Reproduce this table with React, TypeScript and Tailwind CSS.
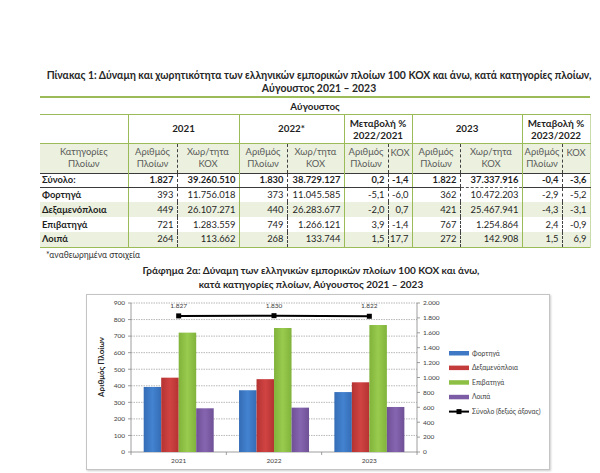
import React from "react";

type Row = string[];

const total: Row = ["Σύνολο:", "1.827", "39.260.510", "1.830", "38.729.127", "0,2", "-1,4", "1.822", "37.337.916", "-0,4", "-3,6"];
const rows: Row[] = [
  ["Φορτηγά", "393", "11.756.018", "373", "11.045.585", "-5,1", "-6,0", "362", "10.472.203", "-2,9", "-5,2"],
  ["Δεξαμενόπλοια", "449", "26.107.271", "440", "26.283.677", "-2,0", "0,7", "421", "25.467.941", "-4,3", "-3,1"],
  ["Επιβατηγά", "721", "1.283.559", "749", "1.266.121", "3,9", "-1,4", "767", "1.254.864", "2,4", "-0,9"],
  ["Λοιπά", "264", "113.662", "268", "133.744", "1,5", "17,7", "272", "142.908", "1,5", "6,9"],
];

// right border per column
const rb = [
  "border-r border-r-[#9bbb59]",
  "border-r border-r-[#404040] [border-right-style:dashed]",
  "border-r border-r-[#9bbb59]",
  "border-r border-r-[#404040] [border-right-style:dashed]",
  "border-r border-r-[#9bbb59]",
  "border-r border-r-[#404040] [border-right-style:dashed]",
  "border-r border-r-[#9bbb59]",
  "border-r border-r-[#404040] [border-right-style:dashed]",
  "border-r border-r-[#9bbb59]",
  "border-r border-r-[#404040] [border-right-style:dashed]",
  "border-r border-r-[#c9dba8]",
];

function Chart() {
  const plotL = 44;
  const plotR = 330;
  const y0 = 157;
  const yL = (v: number) => y0 - (v * 149) / 900;
  const yR = (v: number) => y0 - (v * 149) / 2000;
  const gw = (plotR - plotL) / 3;
  const data = [
    { year: "2021", vals: [393, 449, 721, 264], total: 1827, lbl: "1.827" },
    { year: "2022", vals: [373, 440, 749, 268], total: 1830, lbl: "1.830" },
    { year: "2023", vals: [362, 421, 767, 272], total: 1822, lbl: "1.822" },
  ];
  const fills = ["url(#gb)", "url(#gr)", "url(#gg)", "url(#gp)"];
  const legendCols = ["#3f78c4", "#c33b3a", "#8dbf45", "#7c5ca4"];
  const legend = ["Φορτηγά", "Δεξαμενόπλοια", "Επιβατηγά", "Λοιπά"];
  const centers = data.map((_, i) => plotL + gw * i + gw / 2);
  const font = "Lato, 'Noto Sans', sans-serif";
  return (
    <svg width="462" height="174" viewBox="0 0 462 174" style={{ fontFamily: font }}>
      <defs>
        <linearGradient id="gb" x1="0" x2="1" y1="0" y2="0">
          <stop offset="0" stopColor="#356cb6" />
          <stop offset="0.5" stopColor="#4383d0" />
          <stop offset="1" stopColor="#356cb6" />
        </linearGradient>
        <linearGradient id="gr" x1="0" x2="1" y1="0" y2="0">
          <stop offset="0" stopColor="#b43332" />
          <stop offset="0.5" stopColor="#d04443" />
          <stop offset="1" stopColor="#b43332" />
        </linearGradient>
        <linearGradient id="gg" x1="0" x2="1" y1="0" y2="0">
          <stop offset="0" stopColor="#81b33b" />
          <stop offset="0.5" stopColor="#98cb4e" />
          <stop offset="1" stopColor="#81b33b" />
        </linearGradient>
        <linearGradient id="gp" x1="0" x2="1" y1="0" y2="0">
          <stop offset="0" stopColor="#6f5196" />
          <stop offset="0.5" stopColor="#8665b0" />
          <stop offset="1" stopColor="#6f5196" />
        </linearGradient>
      </defs>
      {[1, 2, 3, 4, 5, 6, 7, 8, 9].map((k) => (
        <line key={k} x1={plotL} x2={plotR} y1={yL(k * 100)} y2={yL(k * 100)} stroke="#9a9a9a" strokeWidth="0.7" strokeDasharray="1.5 1" />
      ))}
      <line x1={plotL} x2={plotL} y1={yL(900)} y2={y0} stroke="#868686" strokeWidth="0.8" />
      {[0, 1, 2, 3, 4, 5, 6, 7, 8, 9].map((k) => (
        <g key={k}>
          <line x1={plotL - 3} x2={plotL} y1={yL(k * 100)} y2={yL(k * 100)} stroke="#868686" strokeWidth="0.8" />
          <text x={plotL - 6} y={yL(k * 100) + 2.3} fontSize="6.5" fill="#404040" textAnchor="end">
            {k * 100}
          </text>
        </g>
      ))}
      <line x1={plotR} x2={plotR} y1={yR(2000)} y2={y0} stroke="#868686" strokeWidth="0.8" />
      {[0, 1, 2, 3, 4, 5, 6, 7, 8, 9, 10].map((k) => {
        const v = k * 200;
        const s = v >= 1000 ? `${Math.floor(v / 1000)}.${String(v % 1000).padStart(3, "0")}` : String(v);
        return (
          <g key={k}>
            <line x1={plotR} x2={plotR + 3} y1={yR(v)} y2={yR(v)} stroke="#868686" strokeWidth="0.8" />
            <text x={plotR + 6} y={yR(v) + 2.3} fontSize="6.5" fill="#404040">
              {s}
            </text>
          </g>
        );
      })}
      <line x1={plotL} x2={plotR} y1={y0} y2={y0} stroke="#868686" strokeWidth="0.8" />
      {[0, 1, 2, 3].map((k) => (
        <line key={k} x1={plotL + gw * k} x2={plotL + gw * k} y1={y0} y2={y0 + 3} stroke="#868686" strokeWidth="0.8" />
      ))}
      {data.map((d, i) => (
        <g key={d.year}>
          {d.vals.map((v, j) => (
            <rect key={j} x={plotL + gw * i + 12.7 + j * 17.5} y={yL(v)} width="17.5" height={y0 - yL(v)} fill={fills[j]} />
          ))}
          <text x={centers[i]} y={y0 + 11} fontSize="6.5" fill="#404040" textAnchor="middle">
            {d.year}
          </text>
        </g>
      ))}
      <polyline points={data.map((d, i) => `${centers[i]},${yR(d.total)}`).join(" ")} fill="none" stroke="#000" strokeWidth="2" />
      {data.map((d, i) => (
        <g key={"m" + i}>
          <rect x={centers[i] - 2.5} y={yR(d.total) - 2.5} width="5" height="5" fill="#000" />
          <text x={centers[i]} y={yR(d.total) - 8} fontSize="6.5" fill="#404040" textAnchor="middle">
            {d.lbl}
          </text>
        </g>
      ))}
      <text x="0" y="0" transform="translate(17,72) rotate(-90)" fontSize="8" fontWeight="700" fill="#262626" textAnchor="middle">
        Αριθμός Πλοίων
      </text>
      {legend.map((l, i) => (
        <g key={l}>
          <rect x="362" y={56 + i * 14.6} width="20" height="4.5" fill={legendCols[i]} />
          <text x="385" y={60.5 + i * 14.6} fontSize="6.8" fill="#404040">
            {l}
          </text>
        </g>
      ))}
      <line x1="362" x2="382" y1={116.6} y2={116.6} stroke="#000" strokeWidth="2" />
      <rect x="369.5" y="114.1" width="5" height="5" fill="#000" />
      <text x="385" y="119" fontSize="6.8" fill="#404040">
        Σύνολο (δεξιός άξονας)
      </text>
    </svg>
  );
}

export default function App() {
  return (
    <div className="w-[600px] h-[473px] overflow-hidden bg-white text-[#1f1f1f] [font-family:Lato,'Noto_Sans',sans-serif]">
      <div className="pt-[69px] ml-[44px] w-[550px] text-center font-bold text-[10.4px] leading-[13px] text-[#262626]">
        Πίνακας 1: Δύναμη και χωρητικότητα των ελληνικών εμπορικών πλοίων 100 ΚΟΧ και άνω, κατά κατηγορίες πλοίων,
        <br />
        Αύγουστος 2021 – 2023
      </div>
      <table className="ml-[40px] w-[550px] table-fixed border-collapse text-[9.4px] mt-[1px]">
        <colgroup>
          <col className="w-[88px]" />
          <col className="w-[49px]" />
          <col className="w-[62px]" />
          <col className="w-[48px]" />
          <col className="w-[57px]" />
          <col className="w-[44px]" />
          <col className="w-[24px]" />
          <col className="w-[48px]" />
          <col className="w-[62px]" />
          <col className="w-[40px]" />
          <col className="w-[28px]" />
        </colgroup>
        <tbody>
          <tr className="h-[17px]">
            <td colSpan={11} className="border-t-2 border-t-[#9bbb59] border-b border-b-[#9bbb59] text-center font-bold p-0 leading-[14px] text-[9.8px]">
              Αύγουστος
            </td>
          </tr>
          <tr className="h-[29px] font-bold text-[9.8px]">
            <td className="border-r border-r-[#9bbb59] border-b border-b-[#9bbb59] p-0"></td>
            <td colSpan={2} className="border-r border-r-[#9bbb59] border-b border-b-[#9bbb59] text-center p-0">2021</td>
            <td colSpan={2} className="border-r border-r-[#9bbb59] border-b border-b-[#9bbb59] text-center p-0">2022*</td>
            <td colSpan={2} className="border-r border-r-[#9bbb59] border-b border-b-[#9bbb59] text-center p-0 leading-[12px]">
              Μεταβολή %<br />2022/2021
            </td>
            <td colSpan={2} className="border-r border-r-[#9bbb59] border-b border-b-[#9bbb59] text-center p-0">2023</td>
            <td colSpan={2} className="border-r border-r-[#c9dba8] border-b border-b-[#9bbb59] text-center p-0 leading-[12px]">
              Μεταβολή %<br />2023/2022
            </td>
          </tr>
          <tr className="h-[30px] bg-[#ebf1de] text-[#5a5a5a] leading-[12px]">
            <td className={`${rb[0]} text-center p-0`}>Κατηγορίες<br />Πλοίων</td>
            <td className={`${rb[1]} text-center p-0`}>Αριθμός<br />Πλοίων</td>
            <td className={`${rb[2]} text-center p-0`}>Χωρ/τητα<br />ΚΟΧ</td>
            <td className={`${rb[3]} text-center p-0`}>Αριθμός<br />Πλοίων</td>
            <td className={`${rb[4]} text-center p-0`}>Χωρ/τητα<br />ΚΟΧ</td>
            <td className={`${rb[5]} text-center p-0`}>Αριθμός<br />Πλοίων</td>
            <td className={`${rb[6]} text-center align-top pt-[3px] p-0`}>ΚΟΧ</td>
            <td className={`${rb[7]} text-center p-0`}>Αριθμός<br />Πλοίων</td>
            <td className={`${rb[8]} text-center p-0`}>Χωρ/τητα<br />ΚΟΧ</td>
            <td className={`${rb[9]} text-center p-0`}>Αριθμός<br />Πλοίων</td>
            <td className={`${rb[10]} text-center align-top pt-[3px] p-0`}>ΚΟΧ</td>
          </tr>
          <tr className="h-[14px] font-bold leading-[12px]">
            {total.map((c, i) => (
              <td
                key={i}
                className={`${rb[i]} border-t border-t-[#3a3a3a] border-b p-0 ${i === 8 ? "border-b-[#555] [border-bottom-style:dashed]" : "border-b-[#3a3a3a]"} ${i === 0 ? "text-left pl-[2px]" : "text-right pr-[3px]"}`}
              >
                {c}
              </td>
            ))}
          </tr>
          {rows.map((r, ri) => (
            <tr key={ri} className={`h-[15px] leading-[12px] ${ri % 2 === 1 ? "bg-[#ebf1de]" : ""} ${ri === 3 ? "border-b border-b-[#9bbb59]" : ""}`}>
              {r.map((c, i) => (
                <td key={i} className={`${rb[i]} p-0 ${i === 0 ? "text-left pl-[2px] font-bold" : "text-right pr-[3px]"}`}>
                  {c}
                </td>
              ))}
            </tr>
          ))}
        </tbody>
      </table>
      <div className="ml-[46px] mt-[1px] text-[8.5px] leading-[12px] text-[#333]">*αναθεωρημένα στοιχεία</div>
      <div className="mt-[2px] ml-[36px] w-[550px] text-center font-bold text-[10px] leading-[14px] text-[#262626]">
        Γράφημα 2α: Δύναμη των ελληνικών εμπορικών πλοίων 100 ΚΟΧ και άνω,
        <br />
        κατά κατηγορίες πλοίων, Αύγουστος 2021 – 2023
      </div>
      <div className="mt-[3px] ml-[86px] w-[464px] h-[176px] border border-[#c4c4c4] shadow-[1px_1px_2px_rgba(0,0,0,0.2)]">
        <Chart />
      </div>
    </div>
  );
}
